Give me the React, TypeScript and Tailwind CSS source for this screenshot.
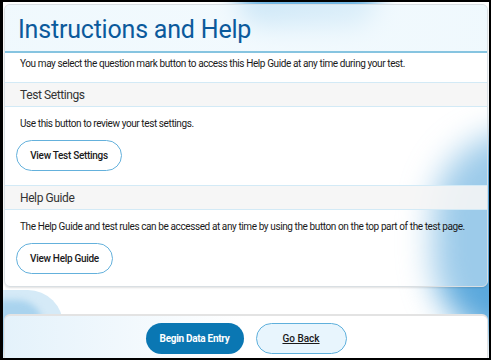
import React from 'react'

const font = { fontFamily: 'Roboto, "Noto Sans", sans-serif' }

const Section = ({ title, text, button, width }: { title: string; text: string; button: string; width: string }) => (
  <div>
    <div className="h-[25px] border-y border-[#d3eaf6] bg-[#f5f5f5]/90 pl-[15px] flex items-center text-[12px] tracking-[-0.4px] text-[#333]">
      {title}
    </div>
    <p className="pl-[15px] pt-[10px] text-[10px] leading-[14px] tracking-[-0.4px] text-[#1a1a1a]">{text}</p>
    <button
      className={`ml-[11px] mt-[9px] h-[31px] ${width} rounded-full border border-[#64b1dc] bg-white text-[10px] tracking-[-0.3px] font-medium text-[#1a1a1a]`}
    >
      {button}
    </button>
  </div>
)

const App = () => {
  return (
    <div style={font} className="w-[491px] h-[360px] bg-black pl-[3px] pt-[2px] pr-[2px] pb-[2px]">
      <div className="relative w-full h-full bg-white overflow-hidden flex flex-col">
        {/* background swooshes */}
        <div className="absolute left-[235px] top-[-28px] w-[140px] h-[52px] rounded-full bg-[#6fb6e4] blur-[12px]" />
        <div className="absolute left-[430px] top-[130px] w-[170px] h-[210px] rounded-full bg-[#5aa8dc] blur-[16px]" />
        <div className="absolute left-[-70px] top-[288px] w-[130px] h-[70px] rounded-full bg-[#d5eaf7]" />
        <div className="absolute left-[-40px] top-[298px] w-[80px] h-[50px] rounded-full bg-[#a9d3ee] blur-[3px]" />

        <div className="relative mx-[1px] mt-[2px] h-[283px] rounded-[6px] border border-[#d9dfe3] bg-white/40 shadow-[0_1px_2px_rgba(0,0,0,0.12)] overflow-hidden">
          <div className="h-[48px] bg-gradient-to-r from-[#eef8fd]/90 via-[#e9f6fd]/60 to-[#eef8fd]/90 border-b-2 border-[#86c4e0] flex items-center pl-[13px]">
            <h1 className="text-[25px] leading-none tracking-[-0.2px] text-[#0b5a9c] pt-[2px]">Instructions and Help</h1>
          </div>
          <p className="pl-[15px] pt-[3px] pb-[10px] text-[10px] leading-[16px] tracking-[-0.4px] text-[#1a1a1a]">
            You may select the question mark button to access this Help Guide at any time during your test.
          </p>
          <Section
            title="Test Settings"
            text="Use this button to review your test settings."
            button="View Test Settings"
            width="w-[106px]"
          />
          <div className="h-[14px]" />
          <Section
            title="Help Guide"
            text="The Help Guide and test rules can be accessed at any time by using the button on the top part of the test page."
            button="View Help Guide"
            width="w-[97px]"
          />
        </div>

        <div className="relative mt-auto mx-[1px] h-[44px] rounded-t-[6px] border-t-2 border-x border-[#e3e3e3] bg-gradient-to-r from-[#e4f2fb] via-white to-white flex items-center justify-center gap-[12px] pt-[2px]">
          <button className="h-[31px] w-[98px] rounded-full bg-[#0a77b3] text-white text-[10px] tracking-[-0.3px] font-bold">
            Begin Data Entry
          </button>
          <button className="h-[31px] w-[91px] rounded-full border border-[#5fb0dc] bg-[#e8f5fd] text-[10px] font-medium text-[#1a1a1a] underline">
            Go Back
          </button>
        </div>
      </div>
    </div>
  )
}

export default App
